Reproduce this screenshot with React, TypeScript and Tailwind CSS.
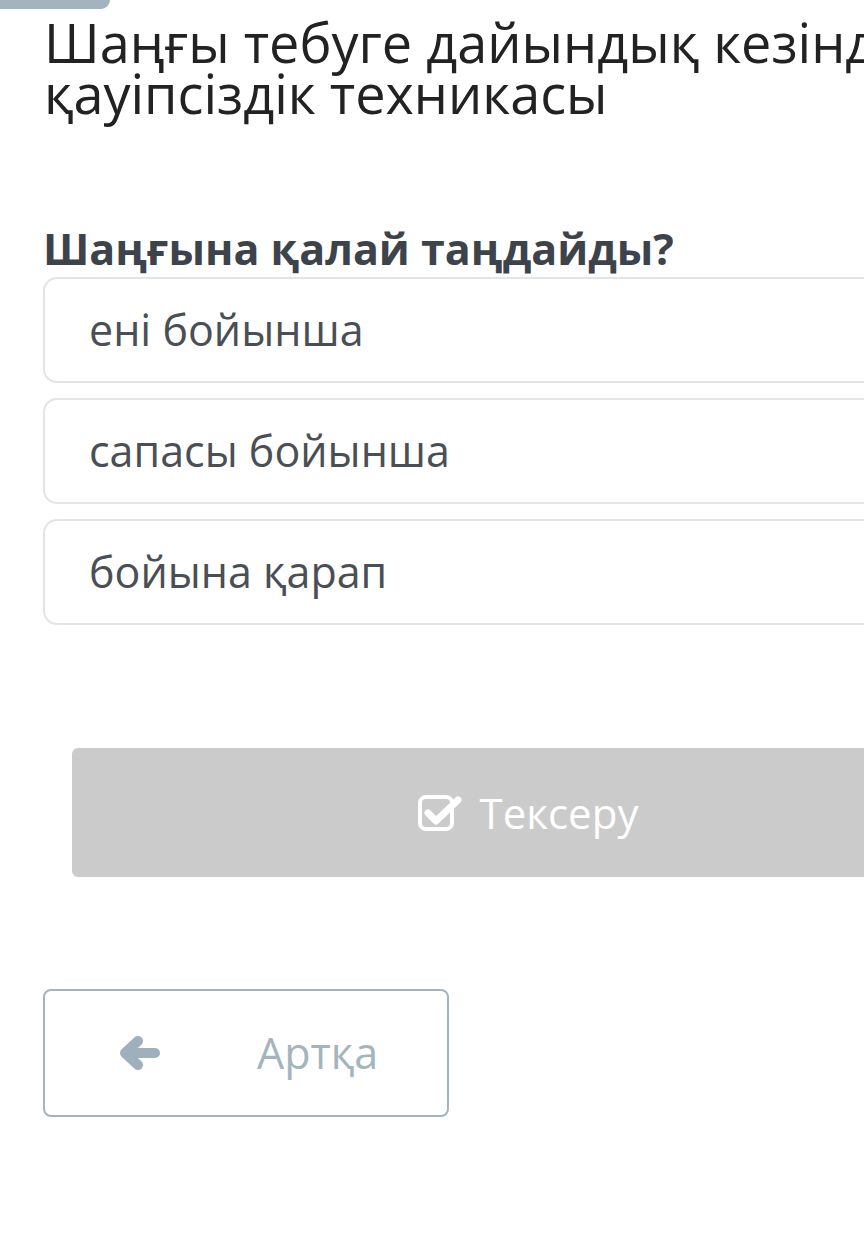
import React from 'react';

const options = ['ені бойынша', 'сапасы бойынша', 'бойына қарап'];

const CheckIcon = () => (
  <svg width="46" height="40" viewBox="0 0 46 40" fill="none">
    <rect x="2" y="4" width="32" height="32" rx="6" stroke="white" strokeWidth="4" />
    <path d="M10 20 L18 28 L40 7" stroke="white" strokeWidth="7" strokeLinecap="round" strokeLinejoin="round" />
  </svg>
);

const ArrowLeft = () => (
  <svg width="44" height="36" viewBox="0 0 44 36" fill="none">
    <path d="M38 18 H12 M21 6 L8 18 L21 30" stroke="#9fb0bd" strokeWidth="10" strokeLinecap="round" strokeLinejoin="round" />
  </svg>
);

const App: React.FC = () => {
  return (
    <div className="w-[864px] h-[1258px] overflow-hidden bg-white font-['Open_Sans',sans-serif]">
      <div className="w-[1100px]">
        {/* top tab */}
        <div className="w-[110px] h-[9px] bg-[#a4b4bf] rounded-br-[10px]"></div>

        {/* Title */}
        <h1 className="pl-[44px] pt-[8px] text-[54px] leading-[51px] text-[#222] whitespace-nowrap">
          Шаңғы тебуге дайындық кезіндегі
          <br />
          қауіпсіздік техникасы
        </h1>

        {/* Question */}
        <div className="pl-[43px] mt-[106px]">
          <h2 className="text-[43px] leading-[48px] font-bold text-[#3d434b]">Шаңғына қалай таңдайды?</h2>
          <div className="flex flex-col gap-[15px] mt-[4px] w-[1000px]">
            {options.map((o) => (
              <div
                key={o}
                className="h-[106px] border-2 border-[#e2e5e6] rounded-[14px] flex items-center pl-[44px] text-[43px] text-[#4a4f55]"
              >
                {o}
              </div>
            ))}
          </div>
        </div>

        {/* Check button */}
        <div className="pl-[72px] mt-[123px]">
          <div className="w-[912px] h-[129px] bg-[#cbcbcb] rounded-[6px] flex items-center justify-center gap-[16px] text-white text-[42px]">
            <CheckIcon />
            <span>Тексеру</span>
          </div>
        </div>

        {/* Back button */}
        <div className="pl-[43px] mt-[112px]">
          <div className="w-[406px] h-[128px] border-2 border-[#a4b4bf] rounded-[8px] flex items-center pl-[72px]">
            <ArrowLeft />
            <span className="ml-[96px] text-[43px] text-[#a4b4bf]">Артқа</span>
          </div>
        </div>
      </div>
    </div>
  );
};

export default App;
